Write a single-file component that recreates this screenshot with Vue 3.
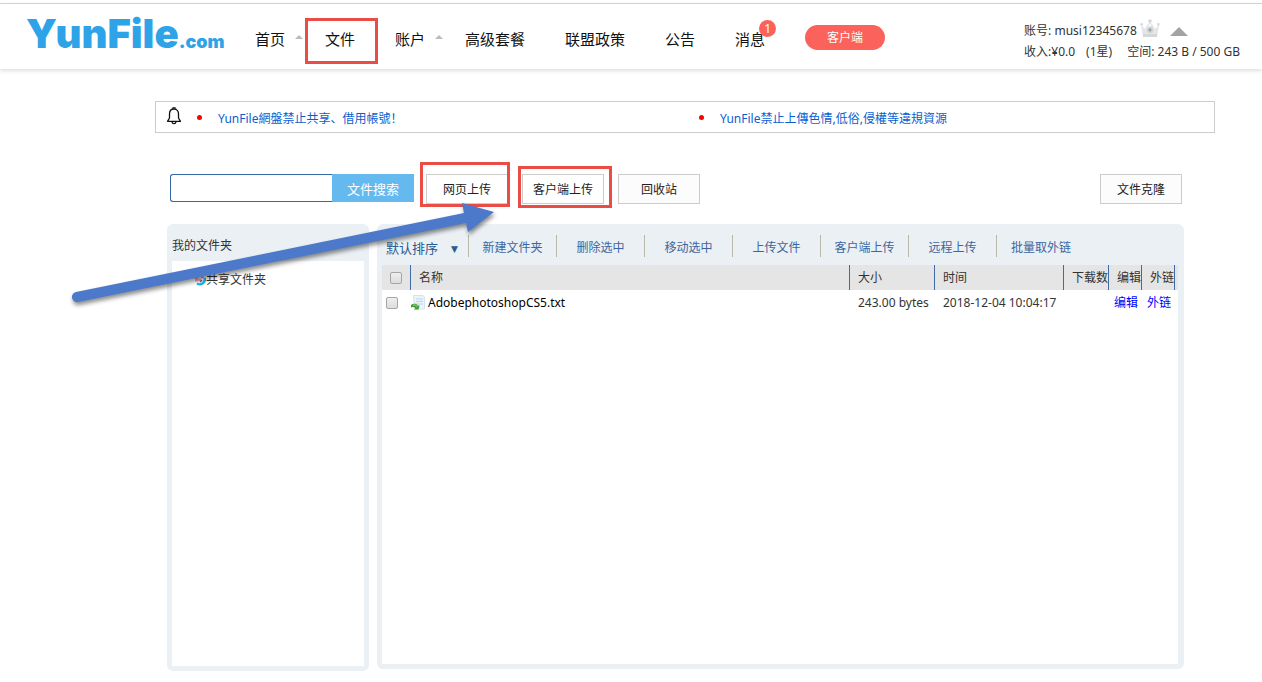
<script setup>
import { ref } from 'vue'

const nav = [
  { label: '首页', caret: true },
  { label: '文件', marked: true },
  { label: '账户', caret: true },
  { label: '高级套餐' },
  { label: '联盟政策' },
  { label: '公告' },
  { label: '消息', badge: 1 },
]
const notices = ['YunFile網盤禁止共享、借用帳號！', 'YunFile禁止上傳色情,低俗,侵權等違規資源']
const actions = ['新建文件夹', '删除选中', '移动选中', '上传文件', '客户端上传', '远程上传', '批量取外链']
const files = [{ name: 'AdobephotoshopCS5.txt', size: '243.00 bytes', time: '2018-12-04 10:04:17' }]
const keyword = ref('')
</script>

<template>
  <div class="page">
    <header class="header">
      <a class="logo" href="#"><span class="logo-name">YunFile</span><span class="logo-tld">.com</span></a>
      <nav class="nav">
        <a v-for="n in nav" :key="n.label" href="#" class="nav-item" :class="{ caret: n.caret, marked: n.marked }">
          {{ n.label }}<span v-if="n.badge" class="badge">{{ n.badge }}</span>
        </a>
        <a href="#" class="client">客户端</a>
      </nav>
      <div class="account">
        <div class="account-line">
          <span>账号: musi12345678</span>
          <svg class="crown" width="20" height="20" viewBox="0 0 20 20">
            <path d="M1 6 L5 10 L7 6 L10 3 L13 6 L15 10 L19 6 L17 18 H3 Z" fill="#e3e5e6" />
            <path d="M3 15 H17 V18 H3 Z" fill="#d5d7d8" />
            <circle cx="10" cy="2" r="1.7" fill="#d3d5d6" />
            <circle cx="1.7" cy="5.5" r="1.4" fill="#d9dbdc" />
            <circle cx="18.3" cy="5.5" r="1.4" fill="#d9dbdc" />
            <circle cx="10" cy="11" r="3" fill="#cbd0d3" />
            <circle cx="10" cy="11" r="1.4" fill="#98a3ab" />
            <path d="M8 8 L10 5 L11 7" stroke="#fff" fill="none" />
          </svg>
          <svg class="up" width="18" height="9" viewBox="0 0 18 9"><path d="M0 9 L9 0 L18 9 Z" fill="#a3a3a3" /></svg>
        </div>
        <div class="account-line"><span>收入:¥0.0</span><span class="stars">(1星)</span><span class="space">空间: 243 B / 500 GB</span></div>
      </div>
    </header>

    <main class="main">
      <section class="notice">
        <svg class="bell" width="16" height="18" viewBox="0 0 16 18" fill="none" stroke="#111" stroke-width="1.3">
          <path d="M8 2 C4.8 2 3.5 4.5 3.5 7 V11 L1.5 14.3 H14.5 L12.5 11 V7 C12.5 4.5 11.2 2 8 2 Z" stroke-linejoin="round" />
          <path d="M7 1.7 V.8 H9 V1.7 M6 14.8 C6.3 17.2 9.7 17.2 10 14.8" />
        </svg>
        <ul class="notice-list">
          <li v-for="t in notices" :key="t"><a href="#">{{ t }}</a></li>
        </ul>
      </section>

      <section class="tools">
        <form class="search" @submit.prevent>
          <input v-model="keyword" type="text" aria-label="文件搜索" />
          <button type="submit">文件搜索</button>
        </form>
        <button type="button" class="tool web">网页上传</button>
        <button type="button" class="tool desk">客户端上传</button>
        <button type="button" class="tool">回收站</button>
        <button type="button" class="tool clone">文件克隆</button>
      </section>

      <div class="panels">
        <aside class="panel folders">
          <h2>我的文件夹</h2>
          <div class="folder-list">
            <a href="#" class="folder">
              <svg width="12" height="12" viewBox="0 0 12 12" fill="none" stroke-width="2.4">
                <path d="M2 5 C3 1 8 1 9 4" stroke="#f4809a" />
                <path d="M1 6.5 L7 5.5" stroke="#f7a8bb" />
                <path d="M10.5 4 C12 8 7 12 3 9.5" stroke="#1cb0f0" />
                <path d="M8 6 L6 8" stroke="#4b62b8" stroke-width="1.2" />
              </svg>共享文件夹
            </a>
          </div>
        </aside>

        <section class="panel files">
          <div class="actions">
            <button type="button" class="sort">默认排序<span>▼</span></button>
            <button v-for="a in actions" :key="a" type="button" class="action">{{ a }}</button>
          </div>
          <div class="sheet">
            <table>
              <colgroup>
                <col class="c-check" /><col /><col class="c-size" /><col class="c-time" /><col class="c-down" /><col class="c-link" /><col class="c-link" /><col class="c-end" />
              </colgroup>
              <thead>
                <tr>
                  <th class="check"><input type="checkbox" aria-label="全选" /></th>
                  <th>名称</th><th>大小</th><th>时间</th><th>下载数</th><th>编辑</th><th>外链</th><th class="end"></th>
                </tr>
              </thead>
              <tbody>
                <tr v-for="f in files" :key="f.name">
                  <td class="check"><input type="checkbox" :aria-label="f.name" /></td>
                  <td class="name">
                    <a href="#">
                      <svg width="15" height="16" viewBox="0 0 15 16">
                        <path d="M2.5 .5 H12 L13.5 2 V14 H3.5 Z" fill="#eaf4fb" stroke="#d3e2ee" />
                        <path d="M5 4 H12 M5 6.5 H12 M5 9 H12" stroke="#bcd6e8" />
                        <path d="M0 10 C2.5 8 6 8.5 6.5 10.5 L8.5 10.5 L7.5 14.5 L3 14.5 L4.5 13 C3 11.7 1.5 11.7 0 12.5 Z" fill="#3f9e2e" />
                        <path d="M2 10.3 C4 9.5 5.5 10.2 6 11.9" stroke="#a4dc82" fill="none" />
                      </svg>{{ f.name }}
                    </a>
                  </td>
                  <td>{{ f.size }}</td><td>{{ f.time }}</td><td></td>
                  <td class="link"><a href="#">编辑</a></td>
                  <td class="link"><a href="#">外链</a></td>
                  <td></td>
                </tr>
              </tbody>
            </table>
          </div>
        </section>
      </div>
    </main>

    <svg class="pointer" width="520" height="320" viewBox="0 0 520 320" aria-hidden="true">
      <path d="M76 292 L464 213 L462 203 L494 212 L468 232 L466 223 L78 302 A5 5 0 0 1 76 292 Z" fill="#4d79ca" />
    </svg>
  </div>
</template>

<style>
body { margin: 0; background: #fff; }
</style>

<style scoped>
* { box-sizing: border-box; }
.page {
  position: relative;
  padding-top: 3px;
  font: 12px/18px "Noto Sans", "Noto Sans CJK SC", sans-serif;
  color: #333;
}
a { color: inherit; text-decoration: none; }
button, input { font: inherit; margin: 0; }
button { cursor: pointer; padding: 0; white-space: nowrap; }
.header {
  display: flex;
  height: 66px;
  align-items: center;
  padding: 0 22px 0 26px;
  border-top: 1px solid #d3d3d3;
  box-shadow: 0 2px 4px rgba(0, 0, 0, 0.13);
  white-space: nowrap;
}
.logo { width: 229px; flex: none; padding-top: 4px; color: #2fa3e7; line-height: 40px; font-family: Inter, sans-serif; font-weight: 900; }
.logo-name { font-size: 40px; }
.logo-tld { font-size: 18px; }
.nav { display: flex; align-items: center; gap: 40px; padding-top: 2px; font-size: 15px; line-height: 24px; color: #111; }
.nav-item { position: relative; top: 0; padding-top: 2px; }
.caret::after {
  content: "";
  position: absolute;
  left: 40px;
  top: 10px;
  border: 4px solid transparent;
  border-top: 0;
  border-bottom-color: #bbb;
}
.marked::before { content: ""; position: absolute; inset: -7px -23px -13px -20px; border: 3px solid #ea4c46; }
.badge {
  position: absolute;
  left: 24px;
  top: -5px;
  width: 17px;
  height: 17px;
  border-radius: 50%;
  background: #fb625b;
  color: #fff;
  font-size: 12px;
  line-height: 17px;
  text-align: center;
}
.client { width: 80px; height: 25px; border-radius: 13px; background: #fb625b; color: #fff; font-size: 12px; line-height: 25px; text-align: center; }
.account { margin-left: auto; padding-top: 10px; }
.account-line { display: flex; align-items: center; height: 21px; }
.crown { margin: -4px 0 0 3px; }
.up { margin-left: 10px; }
.stars { margin-left: 11px; }
.space { margin-left: 15px; }

.main { padding: 32px 47px 0 155px; }
.notice { display: flex; align-items: center; height: 32px; border: 1px solid #ccc; padding-left: 10px; }
.bell { flex: none; margin-bottom: 2px; }
.notice-list { display: grid; grid-template-columns: 502px 1fr; flex: 1; margin: 0; padding: 0 0 0 15px; list-style: none; color: #0a5fd0; }
.notice-list li { display: flex; align-items: center; gap: 16px; }
.notice-list li::before { content: ""; width: 5px; height: 5px; border-radius: 50%; background: #f00; }
.notice-list a { padding-top: 3px; }

.tools { display: flex; align-items: flex-start; gap: 14px; margin: 41px 33px 0 15px; height: 50px; }
.search { display: flex; width: 244px; height: 28px; }
.search input { width: 162px; border: 1px solid #3568a0; border-right: 0; border-radius: 3px 0 0 3px; padding: 0 6px; background: #fff; }
.search button { flex: 1; padding-top: 2px; border: 0; background: #64b9ef; color: #fff; font-size: 13px; }
.tool { position: relative; width: 82px; height: 30px; padding-top: 2px; border: 1px solid #ccc; background: #fcfcfc; color: #222; }
.web { margin-left: -2px; background: #fff; }
.desk { background: #fff; }
.web::after, .desk::after { content: ""; position: absolute; border: 3px solid #ea4c46; }
.web::after { inset: -13px -3px -4px -7px; }
.desk::after { inset: -9px -9px -5px -5px; }
.clone { margin-left: auto; }

.panels { display: flex; align-items: flex-start; gap: 8px; margin: 0 31px 0 12px; }
.panel { display: flex; flex-direction: column; background: #eaf0f4; border-radius: 6px; padding: 0 5px 5px; }
.folders { width: 202px; min-height: 447px; }
.files { flex: 1; min-width: 0; min-height: 445px; padding-right: 6px; }
.folders h2 { margin: 0; height: 37px; padding-top: 3px; font-size: 12px; line-height: 37px; font-weight: 400; }
.folder-list { flex: 1; background: #fff; padding: 10px 0 0 22px; }
.folder { display: flex; align-items: center; }
.actions { display: flex; height: 41px; padding-top: 11px; }
.actions button { height: 22px; border: 0; border-right: 1px solid #bbb8a6; background: none; color: #3c66a0; padding-top: 4px; }
.actions .sort { width: 87px; padding-left: 4px; text-align: left; font-size: 13px; color: #295a91; }
.sort span { margin-left: 13px; font-size: 9px; font-family: "DejaVu Sans", sans-serif; vertical-align: 1px; }
.actions .action { width: 88px; }
.actions .action:last-child { border-right: 0; }
.sheet { flex: 1; background: #fff; }
table { width: 100%; table-layout: fixed; border-spacing: 0; }
.c-check { width: 29px; }
.c-size { width: 85px; }
.c-time { width: 129px; }
.c-down { width: 45px; }
.c-link { width: 33px; }
.c-end { width: 3px; }
th, td { height: 25px; padding: 0 0 0 8px; text-align: left; font-weight: 400; white-space: nowrap; }
th { background: #e5e5e5; border-right: 1px solid #3f6ca8; }
th.end { border: 0; padding: 0; }
th.check { padding-left: 8px; }
td.check { padding-left: 4px; }
td.name { padding-left: 0; color: #000; }
td.name a { display: flex; align-items: center; gap: 2px; }
td.link { padding-left: 5px; color: #00f; }
input[type="checkbox"] { display: block; appearance: none; width: 12px; height: 12px; border: 1px solid #a5a5a5; border-radius: 2px; background: linear-gradient(#eee, #ddd); }
input[type="checkbox"]:checked { background: #3568a0; }
.pointer { position: absolute; left: 0; top: 0; pointer-events: none; filter: drop-shadow(1px 3px 2px rgba(0, 0, 0, 0.45)); }
</style>
